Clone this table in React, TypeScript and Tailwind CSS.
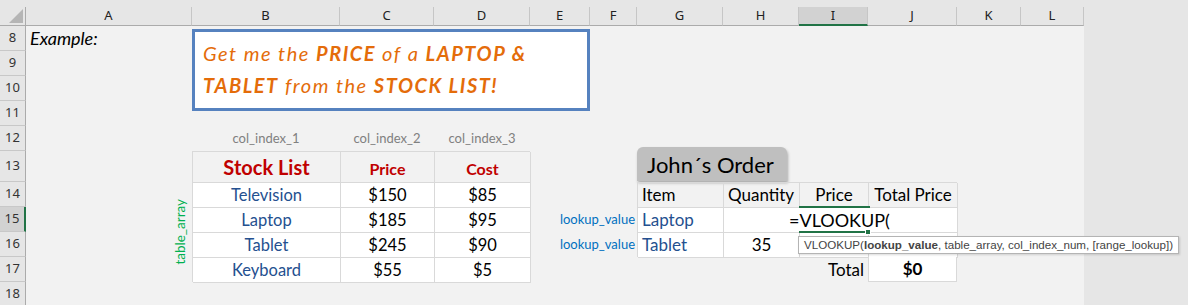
import React from 'react';

const COLUMNS = [
  { l: 'A', w: 'w-[166px]' },
  { l: 'B', w: 'w-[148px]' },
  { l: 'C', w: 'w-[94px]' },
  { l: 'D', w: 'w-[96px]' },
  { l: 'E', w: 'w-[60px]' },
  { l: 'F', w: 'w-[47px]' },
  { l: 'G', w: 'w-[86px]' },
  { l: 'H', w: 'w-[76px]' },
  { l: 'I', w: 'w-[69px]', active: true },
  { l: 'J', w: 'w-[89px]' },
  { l: 'K', w: 'w-[64px]' },
  { l: 'L', w: 'w-[63px]' },
];

const ROWS = [
  { n: 8, h: 'h-[25px]' },
  { n: 9, h: 'h-[25px]' },
  { n: 10, h: 'h-[25px]' },
  { n: 11, h: 'h-[25px]' },
  { n: 12, h: 'h-[25px]' },
  { n: 13, h: 'h-[31px]' },
  { n: 14, h: 'h-[25px]' },
  { n: 15, h: 'h-[25px]', active: true },
  { n: 16, h: 'h-[25px]' },
  { n: 17, h: 'h-[25px]' },
  { n: 18, h: 'h-[25px]' },
];

const STOCK = [
  { item: 'Television', price: '$150', cost: '$85' },
  { item: 'Laptop', price: '$185', cost: '$95' },
  { item: 'Tablet', price: '$245', cost: '$90' },
  { item: 'Keyboard', price: '$55', cost: '$5' },
];

const cell = 'border-r border-b border-[#d9d9d9] flex items-center';

function ColumnHeader() {
  return (
    <div className="flex h-[19px] shrink-0 font-['Noto_Sans',sans-serif] text-[13px] text-[#222]">
      <div className="w-[26px] border-r border-b border-[#ababab] relative">
        <svg className="absolute left-[9px] top-[2px]" width="14" height="14" viewBox="0 0 14 14">
          <polygon points="14,0 14,14 0,14" fill="#b5b5b5" />
        </svg>
      </div>
      {COLUMNS.map((c) => (
        <div
          key={c.l}
          className={`${c.w} flex items-center justify-center border-r border-[#c6c6c6] ${
            c.active ? 'bg-[#d2d2d2] border-b-2 border-b-[#217346]' : 'border-b border-b-[#ababab]'
          }`}
        >
          {c.l}
        </div>
      ))}
    </div>
  );
}

function RowHeader() {
  return (
    <div className="w-[26px] shrink-0 flex flex-col font-['Noto_Sans',sans-serif] text-[13px] text-[#333]">
      {ROWS.map((r) => (
        <div
          key={r.n}
          className={`${r.h} shrink-0 flex items-center justify-center border-b border-[#c8c8c8] ${
            r.active ? 'bg-[#d2d2d2] border-r-2 border-r-[#217346]' : 'border-r border-r-[#ababab]'
          }`}
        >
          {r.n}
        </div>
      ))}
    </div>
  );
}

function StockList() {
  return (
    <div className="col-start-2 col-span-3 row-start-6 row-span-5 grid grid-cols-[148px_94px_96px] grid-rows-[31px_25px_25px_25px_25px] border-t border-l border-[#d9d9d9]">
      <div className={`${cell} justify-center text-[20px] font-bold text-[#c00000]`}>Stock List</div>
      <div className={`${cell} justify-center text-[16px] font-bold text-[#c00000] pt-[3px]`}>Price</div>
      <div className={`${cell} justify-center text-[16px] font-bold text-[#c00000] pt-[3px]`}>Cost</div>
      {STOCK.map((s) => (
        <React.Fragment key={s.item}>
          <div className={`${cell} justify-center bg-white text-[16.5px] text-[#24508f]`}>{s.item}</div>
          <div className={`${cell} justify-center bg-white text-[16.5px] text-black`}>{s.price}</div>
          <div className={`${cell} justify-center bg-white text-[16.5px] text-black`}>{s.cost}</div>
        </React.Fragment>
      ))}
    </div>
  );
}

function OrderTable() {
  return (
    <div className="col-start-7 col-span-4 row-start-7 row-span-3 grid grid-cols-[86px_76px_69px_89px] grid-rows-[25px_25px_25px] border-t border-l border-[#d9d9d9] text-[17px]">
      <div className={`${cell} pl-[4px] text-black`}>Item</div>
      <div className={`${cell} pl-[4px] text-black`}>Quantity</div>
      <div className={`${cell} justify-center text-black`}>Price</div>
      <div className={`${cell} justify-center text-black`}>Total Price</div>

      <div className={`${cell} pl-[4px] bg-white text-[#24508f]`}>Laptop</div>
      <div className={`${cell} bg-white`} />
      {/* active cell being edited */}
      <div className={`${cell} bg-white relative`}>
        <div className="absolute left-[-13px] top-0 w-[170px] h-[24px] bg-white flex items-center pl-[2px] text-[18px] text-black z-10">
          =VLOOKUP(
        </div>
        <div className="absolute left-[-1px] top-[-2px] w-[71px] h-[2px] bg-[#217346] z-20" />
        <div className="absolute left-[-1px] bottom-[-1px] w-[66px] h-[2px] bg-[#217346] z-20" />
        <div className="absolute left-[65px] bottom-[-3px] w-[6px] h-[6px] bg-[#217346] border border-white z-20" />
        <div className="absolute left-[-2px] top-[28px] h-[18px] px-[5px] bg-white border border-[#b4b4b4] shadow-[1px_1px_2px_rgba(0,0,0,0.15)] flex items-center whitespace-nowrap font-['Liberation_Sans',sans-serif] text-[11.6px] text-[#444] z-30">
          VLOOKUP(<span className="font-bold">lookup_value</span>, table_array, col_index_num, [range_lookup])
        </div>
      </div>
      <div className={`${cell} bg-white`} />

      <div className={`${cell} pl-[4px] bg-white text-[#24508f]`}>Tablet</div>
      <div className={`${cell} justify-center bg-white text-black`}>35</div>
      <div className={`${cell} bg-white`} />
      <div className={`${cell} bg-white`} />
    </div>
  );
}

export default function App() {
  return (
    <div className="w-[1188px] h-[305px] overflow-hidden bg-[#e6e6e6] flex flex-col font-['Lato',sans-serif]">
      <div className="h-[7px] shrink-0" />
      <ColumnHeader />
      <div className="flex flex-1 min-h-0">
        <RowHeader />
        <div className="w-[1058px] shrink-0 bg-[#f2f2f2] grid grid-cols-[166px_148px_94px_96px_60px_47px_86px_76px_69px_89px_64px_63px] grid-rows-[25px_25px_25px_25px_25px_31px_25px_25px_25px_25px_25px]">
          {/* A8 */}
          <div className="col-start-1 row-start-1 flex items-center pl-[4px] italic text-[18px] text-black">
            Example:
          </div>

          {/* callout */}
          <div className="col-start-2 col-span-4 row-start-1 row-span-4 self-start mt-[3px] h-[82px] border-[3px] border-[#5682bf] bg-white pl-[8px] pt-[5px] italic text-[20px] leading-[32px] tracking-[1.5px] text-[#e46c0a]">
            <div>
              Get me the <span className="font-bold">PRICE</span> of a <span className="font-bold">LAPTOP &amp;</span>
            </div>
            <div>
              <span className="font-bold">TABLET</span> from the <span className="font-bold">STOCK LIST!</span>
            </div>
          </div>

          {/* col index labels */}
          <div className="col-start-2 row-start-5 flex items-end justify-center pb-[3px] text-[13px] text-[#808080]">col_index_1</div>
          <div className="col-start-3 row-start-5 flex items-end justify-center pb-[3px] text-[13px] text-[#808080]">col_index_2</div>
          <div className="col-start-4 row-start-5 flex items-end justify-center pb-[3px] text-[13px] text-[#808080]">col_index_3</div>

          {/* table_array label */}
          <div className="col-start-1 row-start-7 row-span-4 flex items-center justify-end pr-[2px]">
            <span className="[writing-mode:vertical-rl] rotate-180 text-[13.5px] text-[#00b050]">table_array</span>
          </div>

          <StockList />

          {/* lookup_value labels */}
          <div className="col-start-5 col-span-2 row-start-8 flex items-center justify-end pr-[2px] text-[13px] text-[#0070c0]">lookup_value</div>
          <div className="col-start-5 col-span-2 row-start-9 flex items-center justify-end pr-[2px] text-[13px] text-[#0070c0]">lookup_value</div>

          {/* John's Order tab */}
          <div className="col-start-7 col-span-2 row-start-6 self-end mb-[1px] w-[150px] h-[34px] rounded-t-[6px] bg-[#bfbfbf] shadow-[1px_2px_3px_rgba(0,0,0,0.3)] flex items-center pl-[10px] text-[22px] text-black">
            John´s Order
          </div>

          <OrderTable />

          {/* totals row */}
          <div className="col-start-9 row-start-10 flex items-center justify-end pr-[4px] text-[17px] text-black">Total</div>
          <div className="col-start-10 row-start-10 flex items-center justify-center bg-white border-r border-b border-l border-[#d9d9d9] text-[17px] font-bold text-black">
            $0
          </div>
        </div>
      </div>
    </div>
  );
}
